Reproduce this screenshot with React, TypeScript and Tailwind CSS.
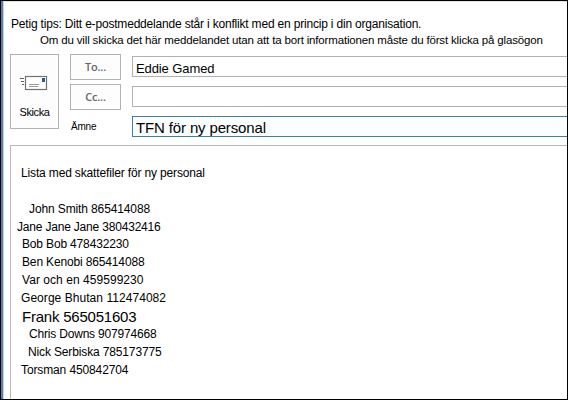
type Entry = { text: string; className: string };

const entries: Entry[] = [
  { text: "John Smith 865414088", className: "h-[18px] pl-[18px] tracking-[-0.12px]" },
  { text: "Jane Jane Jane 380432416", className: "h-[17px] pl-[6px] tracking-[-0.19px]" },
  { text: "Bob Bob 478432230", className: "h-[18px] pl-[11px] tracking-[-0.16px]" },
  { text: "Ben Kenobi 865414088", className: "h-[18px] pl-[11px] tracking-[-0.15px]" },
  { text: "Var och en 459599230", className: "h-[18px] pl-[11px] tracking-[0.05px]" },
  { text: "George Bhutan 112474082", className: "h-[18px] pl-[10px] tracking-[0.05px]" },
  { text: "Frank 565051603", className: "h-[18px] pl-[11px] pt-px text-[15px] tracking-[-0.22px]" },
  { text: "Chris Downs 907974668", className: "h-[18px] pl-[18px] tracking-[-0.19px]" },
  { text: "Nick Serbiska 785173775", className: "h-[18px] pl-[17px] tracking-[-0.14px]" },
  { text: "Torsman 450842704", className: "h-[18px] pl-[10px] tracking-[-0.12px]" },
];

function SendIcon() {
  return (
    <svg width="29" height="16" viewBox="0 0 29 16" fill="none">
      <rect x="5.5" y="1.5" width="21" height="13" fill="#fff" stroke="#707276" strokeWidth="1.2" />
      <rect x="22" y="3" width="3" height="4" fill="#285a8e" />
      <path d="M9 9.5h10M9 11.5h9" stroke="#9a9a9a" />
      <path d="M0 3.5h4M1 6.5h3M2 9.5h2" stroke="#606266" strokeWidth="1.2" />
    </svg>
  );
}

function RecipientButton({ label }: { label: string }) {
  return (
    <button className="flex h-[26px] w-[51px] items-center justify-center border border-[#b2b2b2] bg-[#fdfdfd] font-['Open_Sans',sans-serif] text-[11px] leading-[16px] font-semibold tracking-[-0.2px] text-[#666]">
      {label}
    </button>
  );
}

export default function App() {
  return (
    <div className="flex h-[400px] w-[568px] overflow-hidden border border-black bg-white font-['Liberation_Sans',Arial,sans-serif] text-[12px] leading-[18px] whitespace-nowrap text-black">
      <div className="w-[3px] shrink-0 border-r border-[#c5d8e8] bg-[#5480aa]" />
      <div className="flex min-w-0 flex-1 flex-col border-t border-[#e2e2e2] pl-[6px]">
        <header className="h-[52px] pt-[13px]">
          <p className="h-[16px] pl-px tracking-[-0.19px]">
            Petig tips: Ditt e-postmeddelande står i konflikt med en princip i din organisation.
          </p>
          <p className="pl-[30px] text-[11.5px] tracking-[-0.16px]">
            Om du vill skicka det här meddelandet utan att ta bort informationen måste du först klicka på glasögon
          </p>
        </header>

        <section className="flex h-[91px]">
          <button className="flex h-[75px] w-[49px] flex-col items-center border border-[#b2b2b2] bg-[#fdfdfd] pt-[20px] text-[11px] tracking-[-0.4px]">
            <SendIcon />
            <span className="mt-[12px] leading-[18px]">Skicka</span>
          </button>
          <div className="ml-[11px] flex w-[62px] flex-col gap-[4px]">
            <RecipientButton label="To..." />
            <RecipientButton label="Cc..." />
            <span className="mt-[4px] pl-px text-[10px] tracking-[-0.2px]">Ämne</span>
          </div>
          <div className="flex min-w-0 flex-1 flex-col gap-[9px] pt-[2px]">
            <div className="h-[21px] border border-r-0 border-[#b2b2b2] pt-[3px] pl-[3px] text-[13px] tracking-[-0.1px]">Eddie Gamed</div>
            <div className="h-[21px] border border-r-0 border-[#b2b2b2]" />
            <div className="h-[21px] border border-r-0 border-[#3f7fa5] bg-[#fbfeff] pt-[2px] pl-[3px] text-[15px] tracking-[-0.14px]">
              TFN för ny personal
            </div>
          </div>
        </section>

        <main className="flex-1 border-t border-l border-[#b8b8b8] pt-[18px]">
          <p className="mb-[18px] pl-[10px] tracking-[-0.15px]">Lista med skattefiler för ny personal</p>
          {entries.map(({ text, className }) => (
            <p key={text} className={className}>
              {text}
            </p>
          ))}
        </main>
      </div>
    </div>
  );
}
